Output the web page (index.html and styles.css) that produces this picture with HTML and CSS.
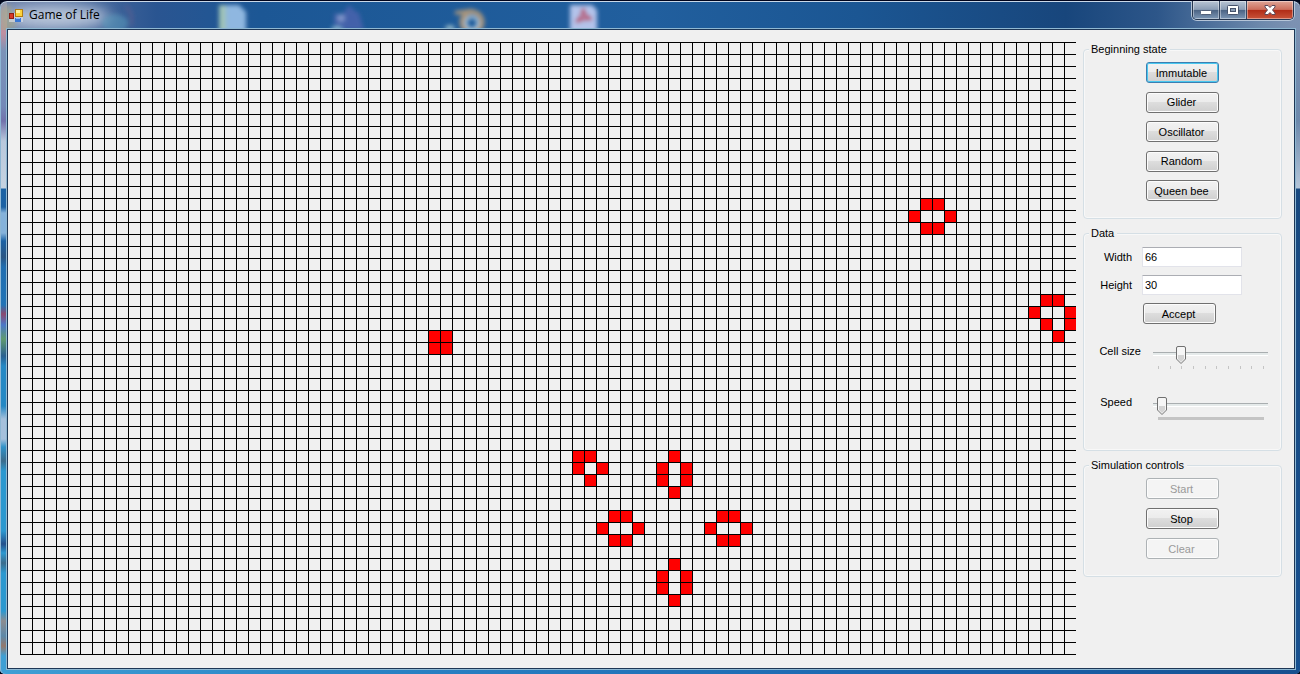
FILE: index.html
```html
<!DOCTYPE html>
<html lang="en">
<head>
<meta charset="utf-8">
<title>Game of Life</title>
<link rel="stylesheet" href="styles.css">
</head>
<body>
<div class="window">
  <svg class="desktop" aria-hidden="true">
    <defs>
      <filter id="soft" x="-50%" y="-50%" width="200%" height="200%"><feGaussianBlur stdDeviation="2"/></filter>
      <filter id="wide" x="-50%" y="-100%" width="200%" height="300%"><feGaussianBlur stdDeviation="7"/></filter>
    </defs>
    <ellipse cx="58" cy="15" rx="52" ry="12" fill="#c3cfe0" opacity=".9" filter="url(#wide)"/>
    <g filter="url(#soft)">
      <ellipse cx="115" cy="21" rx="13" ry="9" fill="#5d9fc0" opacity=".5"/>
      <path d="M126 4q8 8 5 20" fill="none" stroke="#6b5c8d" stroke-width="3" opacity=".5"/>
      <path d="M0 8l10-6 6 22-14 10z" fill="#a9a985" opacity=".6"/>
      <path d="M219 3h20l7 7v20h-27z" fill="#8fb7e0"/>
      <path d="M219 3h7v26h-7z" fill="#9fc3b8"/>
      <path d="M334 11l8 2 7-10 6 6 4 2 5 17h-30z" fill="#5765b4" opacity=".65"/>
      <circle cx="341" cy="16" r="4" fill="#8b9ed0" opacity=".8"/>
      <ellipse cx="337" cy="27" rx="6" ry="3" fill="#79a8c8"/>
      <path d="M455 11l14-2-6 9" fill="none" stroke="#a9957b" stroke-width="4"/>
      <ellipse cx="450" cy="26" rx="5" ry="3" fill="#8fb3c4"/>
      <circle cx="472" cy="20" r="10" fill="none" stroke="#a9957b" stroke-width="5"/>
      <circle cx="472" cy="21" r="6" fill="none" stroke="#a5c4de" stroke-width="3"/>
      <path d="M570 3h22l5 5v22h-27z" fill="#b3c3ea"/>
      <path d="M576 20q8-7 7-14q1 9 9 11q-9-1-16 3" fill="none" stroke="#b65370" stroke-width="3"/>
    </g>
  </svg>
  <header class="titlebar">
    <svg class="app-icon" viewBox="0 0 14 14" aria-hidden="true">
      <rect x="0" y="4" width="14" height="9" fill="#d8dce3" opacity=".7"/>
      <rect x=".5" y="4.500" width="4" height="5" fill="#d93a26" stroke="#8e1c14"/>
      <rect x="6.500" y=".5" width="7" height="7" fill="#fbd23c" stroke="#b27c12"/>
      <rect x="7" y="1" width="4" height="3" fill="#fff0a0"/>
      <rect x="6" y="9" width="6" height="4" fill="#3b78d4"/>
      <rect x="7" y="9" width="4" height="1" fill="#93bdf5"/>
    </svg>
    <h1 class="title">Game of Life</h1>
    <div class="caption-buttons">
      <button class="caption" type="button" aria-label="Minimize">
        <svg width="12" height="12" viewBox="0 0 12 12"><rect x=".5" y="6.500" width="11" height="4" rx="1" fill="#fff" stroke="#53617a"/></svg>
      </button>
      <button class="caption" type="button" aria-label="Maximize">
        <svg width="12" height="12" viewBox="0 0 12 12"><rect x=".5" y="1.500" width="11" height="9" rx="1" fill="#fff" stroke="#46536c"/><rect x="3.500" y="4.500" width="5" height="3" fill="#8b9db5" stroke="#46536c"/></svg>
      </button>
      <button class="caption caption-close" type="button" aria-label="Close">
        <svg width="12" height="12" viewBox="0 0 12 12"><path d="M1 1.500h3l2 2 2-2h3v1.500L8.500 6 11 9v1.500H8l-2-2-2 2H1V9l2.500-3L1 3z" fill="#fff" stroke="#5d4a5a"/></svg>
      </button>
    </div>
  </header>
  <main class="client">
    <svg class="board" role="img" aria-label="Cell grid">
      <defs>
        <pattern id="grid" width="12" height="12" patternUnits="userSpaceOnUse"><path d="M0 0h12v1H1v11H0z"/></pattern>
      </defs>
      <g id="cells" class="cells"></g>
      <rect width="100%" height="100%" fill="url(#grid)"/>
    </svg>
    <form class="sidebar">
      <fieldset class="group group-states">
        <legend>Beginning state</legend>
        <div class="stack">
          <button class="btn btn-default" type="button">Immutable</button>
          <button class="btn" type="button">Glider</button>
          <button class="btn" type="button">Oscillator</button>
          <button class="btn" type="button">Random</button>
          <button class="btn" type="button">Queen bee</button>
        </div>
      </fieldset>
      <fieldset class="group group-data">
        <legend>Data</legend>
        <div class="field"><label for="w">Width</label><input class="text" id="w" type="text" value="66"></div>
        <div class="field"><label for="h">Height</label><input class="text" id="h" type="text" value="30"></div>
        <button class="btn btn-accept" type="button">Accept</button>
        <div class="slider-row">
          <label for="size">Cell size</label>
          <div class="slider">
            <input id="size" type="range" min="1" max="10" value="3">
            <div class="ticks"><i></i><i></i><i></i><i></i><i></i><i></i><i></i><i></i><i></i><i></i></div>
          </div>
        </div>
        <div class="slider-row">
          <label class="label-speed" for="speed">Speed</label>
          <div class="slider">
            <input id="speed" type="range" min="0" max="100" value="4">
            <div class="ticks ticks-dense"></div>
          </div>
        </div>
      </fieldset>
      <fieldset class="group group-sim">
        <legend>Simulation controls</legend>
        <div class="stack stack-sim">
          <button class="btn" type="button" disabled>Start</button>
          <button class="btn" type="button">Stop</button>
          <button class="btn" type="button" disabled>Clear</button>
        </div>
      </fieldset>
    </form>
  </main>
</div>
<script src="board.js"></script>
</body>
</html>
```
FILE: board.js
```js
const PITCH = 12;
// Live cells as [column, row].
const live = [
  [75, 13], [76, 13], [74, 14], [77, 14], [75, 15], [76, 15],
  [85, 21], [86, 21], [84, 22], [87, 22], [85, 23], [87, 23], [86, 24],
  [34, 24], [35, 24], [34, 25], [35, 25],
  [46, 34], [47, 34], [46, 35], [48, 35], [47, 36],
  [54, 34], [53, 35], [55, 35], [53, 36], [55, 36], [54, 37],
  [49, 39], [50, 39], [48, 40], [51, 40], [49, 41], [50, 41],
  [58, 39], [59, 39], [57, 40], [60, 40], [58, 41], [59, 41],
  [54, 43], [53, 44], [55, 44], [53, 45], [55, 45], [54, 46]
];
const layer = document.getElementById("cells");
for (const [col, row] of live) {
  const cell = document.createElementNS("http://www.w3.org/2000/svg", "rect");
  cell.setAttribute("x", col * PITCH);
  cell.setAttribute("y", row * PITCH);
  cell.setAttribute("width", PITCH);
  cell.setAttribute("height", PITCH);
  layer.append(cell);
}
```
FILE: styles.css
```css
* { box-sizing: border-box; }
html { background: #00081c; }
body { margin: 0; font: 11px/13px "Liberation Sans", Arial, sans-serif; color: #000; }
button, input { font: inherit; color: inherit; }

.window {
  position: relative;
  display: flex;
  flex-direction: column;
  min-height: 100vh;
  padding: 0 5px 4px 6px;
  overflow: hidden;
  border-top: 1px solid #00041c;
  border-radius: 7px 7px 5px 5px;
  box-shadow: inset 0 1px #c9d8e8, inset 1px 0 #8db6d4;
  background:
    linear-gradient(#7f93b3 0, #6d89ac 120px, #b4c5d8 187px, #19497f 188px, #17508f 100%) right / 6px 100% no-repeat,
    linear-gradient(#8f9cb4 0, #c08fa0 32px, #7b93b8 50px, #7489b8 105px, #7273ac 120px, #b9c8dc 140px, #c5d3e1 187px,
      #1b62a4 188px, #1c62a4 206px, #85b2da 212px, #85b2da 232px, #1b62a4 240px, #2a5684 256px, #1f6db0 266px, #2274b6 304px,
      #8b4a70 313px, #4a78c8 324px, #609a70 338px, #2a6090 355px, #2588c4 365px, #2588c4 405px, #a5c0dc 418px, #a5c0dc 438px,
      #3092c8 446px, #3c6c8c 460px, #2c98d0 470px, #2c98d0 530px, #24508c 543px, #2c98d0 552px, #3c6c8c 562px, #2c98d0 572px,
      #2c98d0 610px, #8c8c90 620px, #5c88a8 635px, #94786c 645px, #3f9fd4 655px) left / 7px 100% no-repeat,
    linear-gradient(90deg, #3f9fd4 0, #2b85c6 25%, #1a62ac 75%, #17508f 100%) bottom / 100% 6px no-repeat,
    linear-gradient(90deg, #7486ac 0, #2a5591 12%, #1c5795 20%, #215f9e 50%, #1b5693 66%, #18467c 82%, #2d5689 89%, #6d89ac 97%, #7f93b3 100%);
}
.desktop { position: absolute; left: 0; top: 1px; width: 100%; height: 28px; }

.titlebar { position: relative; display: flex; height: 27px; padding-left: 3px; }
.app-icon { width: 14px; height: 14px; margin-top: 8px; }
.title { flex: 1; margin: 7px 0 0 6px; font: 12px/14px "Open Sans", sans-serif; }
.caption-buttons {
  display: flex;
  height: 19px;
  margin-right: 1px;
  border: 1px solid #26364f;
  border-top: 0;
  border-radius: 0 0 5px 5px;
  overflow: hidden;
  box-shadow: 0 0 0 1px #b5c5d8;
}
.caption {
  display: grid;
  place-items: center;
  width: 27px;
  padding: 0;
  border: 0;
  border-right: 1px solid #33445f;
  box-shadow: inset 0 0 0 1px #ffffff66;
  background: linear-gradient(#b9c5d4, #8b9db5 47%, #4a6283 50%, #7d97b6);
}
.caption-close { width: 46px; border-right: 0; background: linear-gradient(#e0a597, #cc6e5c 47%, #b02b16 50%, #c8543a); }

.client {
  position: relative;
  display: flex;
  flex: 1;
  border: 1px solid #1d3655;
  outline: 1px solid #8fb8d2;
  padding: 12px;
  margin: 1px 0 1px 1px;
  background: #f0f0f0;
}
.board { flex: 1; min-width: 0; height: 613px; }
.cells { fill: #f00; }

.sidebar { width: 199px; margin-left: 7px; display: flex; flex-direction: column; gap: 7px; }
.group {
  min-width: 0;
  margin: 0;
  padding: 0;
  border: 1px solid #d5dfe5;
  border-radius: 4px;
  box-shadow: inset 0 0 0 1px #f8f8f8;
}
.group legend { margin-left: 5px; padding: 0 3px 0 2px; line-height: 14px; background: #f0f0f0; }
.stack { display: flex; flex-direction: column; align-items: center; justify-content: space-between; height: 139px; }
.stack-sim { height: 81px; }
.btn {
  display: block;
  width: 73px;
  height: 21px;
  padding: 1px 2px 0 0;
  border: 1px solid #707070;
  border-radius: 3px;
  box-shadow: inset 0 0 0 1px #fcfcfc;
  background: linear-gradient(#f2f2f2, #ebebeb 50%, #dddddd 50%, #cfcfcf);
}
.btn-default { border-color: #3c7fb1; box-shadow: inset 0 0 0 1px #48c8f0; }
.btn:disabled { border-color: #adb2b5; background: #f4f4f4; color: #9a9a9a; }
.group-states { height: 177px; padding-top: 6px; }
.group-data { height: 225px; padding-top: 7px; }
.group-sim { height: 119px; padding-top: 6px; }

.field { display: flex; align-items: center; height: 20px; margin-bottom: 8px; }
.field label { width: 48px; text-align: right; }
.text {
  width: 100px;
  height: 20px;
  margin-left: 10px;
  padding: 0 2px;
  border: 1px solid #e2e3ea;
  border-top-color: #abadb3;
  border-radius: 1px;
  background: #fff;
}
.btn-accept { margin: 0 0 22px 59px; }
.slider-row { display: flex; height: 51px; }
.slider-row label { width: 57px; text-align: right; line-height: 11px; }
.slider-row .label-speed { width: 48px; margin-right: 9px; }
.slider { width: 115px; margin-left: 12px; }
.slider input {
  display: block;
  width: 100%;
  height: 18px;
  margin: 0;
  appearance: none;
  background: linear-gradient(#a9aeb0 1px, #e5eaea 1px, #e5eaea 3px, #fff 3px) 0 6px / 100% 4px no-repeat;
}
.slider input::-webkit-slider-thumb {
  appearance: none;
  width: 10px;
  height: 18px;
  background: url("data:image/svg+xml,%3Csvg xmlns='http://www.w3.org/2000/svg' viewBox='0 0 10 18'%3E%3Cpath d='M.5 2Q.5.5 2 .5h6Q9.500.5 9.500 2v11L5 17.500.5 13z' fill='%23f6f6f6' stroke='%23707070'/%3E%3Cpath d='M2 9h6v4L5 16 2 13z' fill='%23d4d4d4'/%3E%3C/svg%3E");
}
.ticks { display: flex; justify-content: space-between; height: 3px; margin: 2px 4px 0 5px; }
.ticks i { width: 1px; background: #c4c4c4; }
.ticks-dense { background: #c4c4c4; }
```
